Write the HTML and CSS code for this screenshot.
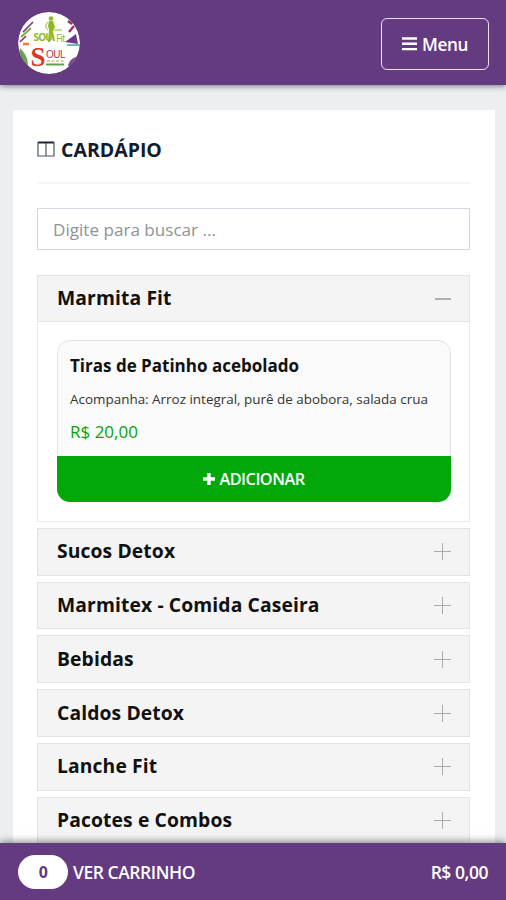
FILE: index.html
```html
<!DOCTYPE html>
<html lang="pt-BR">
<head>
    <meta charset="UTF-8">
    <meta name="viewport" content="width=device-width, initial-scale=1.0">
    <title>Cardápio - Soul Fit</title>
    <link rel="stylesheet" href="styles.css">
</head>
<body>

    <header class="topbar">
        <svg class="logo" viewBox="0 0 62 62" role="img" aria-label="Soul Fit / Soul Food">
            <defs>
                <clipPath id="logoClip"><circle cx="31" cy="31" r="31"/></clipPath>
            </defs>
            <g clip-path="url(#logoClip)">
                <circle cx="31" cy="31" r="31" fill="#fff"/>
                <path d="M5 20 15 10M2 30 8 24" stroke="#7a3d74" stroke-width="1.6"/>
                <path d="M3 25 13 16" stroke="#7fae45" stroke-width="2"/>
                <path d="M51 20 56 14M50 9l4 3" stroke="#a82a5e" stroke-width="2.4"/>
                <path d="M47 30 58 22 60 32Z" fill="#6d3a88"/>
                <path d="M49 33h13" stroke="#3da58c" stroke-width="1.6"/>
                <path d="M5 32h6" stroke="#ee7b3c" stroke-width="2.4"/>
                <path d="M2 36c5 5 8 10 8 18L0 46Z" fill="#6ca34a"/>
                <path d="M50 54c1-5 4-8 8-9l-2 10Z" fill="#7c4a8c"/>
                <!-- figura -->
                <circle cx="33" cy="6.500" r="2.300" fill="#8dbb1e"/>
                <path d="M31 9h4l2 6-2 4 2 10h-2l-2-8-1 9h-2l1-12-1-4Z" fill="#8dbb1e"/>
                <path d="M30 10c-3 3-3 6 0 8M36 18h8" stroke="#8dbb1e" stroke-width="1" fill="none"/>
                <text x="15.500" y="29" class="logo-fit">SOU</text>
                <text x="38" y="30" class="logo-fit thin">Fit</text>
                <text x="12.500" y="54" class="logo-s">S</text>
                <text x="28" y="46" class="logo-oul">OUL</text>
                <path d="M29 49h17" stroke="#c4d99b" stroke-width="2" stroke-dasharray="3 1.500"/>
                <path d="M28 52.500h18" stroke="#5fa548" stroke-width="2"/>
            </g>
        </svg>
        <button type="button" class="btn-menu">
            <svg class="icon-bars" viewBox="0 0 15 14"><path d="M0 1.500h15M0 6.800h15M0 12.100h15"/></svg>
            <span>Menu</span>
        </button>
    </header>

    <main class="card">
        <h1 class="card-title">
            <svg class="icon-columns" viewBox="0 0 18 16"><path d="M1 1.500h16" class="thick"/><path d="M1 1v14h16V1M9 2v13"/></svg>
            <span>CARDÁPIO</span>
        </h1>

        <input type="text" class="search" placeholder="Digite para buscar ...">

        <div class="accordion">
            <section class="group open">
                <h2 class="group-head">Marmita Fit <i class="toggle"></i></h2>
                <div class="group-body">
                    <div class="product">
                        <div class="product-info">
                            <h3>Tiras de Patinho acebolado</h3>
                            <p class="desc">Acompanha: Arroz integral, purê de abobora, salada crua</p>
                            <p class="price">R$ 20,00</p>
                        </div>
                        <button type="button" class="btn-add">
                            <svg class="icon-add" viewBox="0 0 12 12"><path d="M6 0v12M0 6h12"/></svg>
                            <span>ADICIONAR</span>
                        </button>
                    </div>
                </div>
            </section>
            <section class="group"><h2 class="group-head">Sucos Detox <i class="toggle"></i></h2></section>
            <section class="group"><h2 class="group-head">Marmitex - Comida Caseira <i class="toggle"></i></h2></section>
            <section class="group"><h2 class="group-head">Bebidas <i class="toggle"></i></h2></section>
            <section class="group"><h2 class="group-head">Caldos Detox <i class="toggle"></i></h2></section>
            <section class="group"><h2 class="group-head">Lanche Fit <i class="toggle"></i></h2></section>
            <section class="group"><h2 class="group-head">Pacotes e Combos <i class="toggle"></i></h2></section>
        </div>
    </main>

    <footer class="cart-bar">
        <span class="cart-count">0</span>
        <span class="cart-label">VER CARRINHO</span>
        <span class="cart-total">R$ 0,00</span>
    </footer>

</body>
</html>
```
FILE: styles.css
```css
* {
    box-sizing: border-box;
}
body {
    margin: 0;
    height: 900px;
    overflow: hidden;
    display: flex;
    flex-direction: column;
    background: #ebeff2;
    color: #111;
    font-family: "Open Sans", sans-serif;
}
h1, h2, h3, p {
    margin: 0;
}
button {
    font-family: inherit;
    color: #fff;
    cursor: pointer;
}
svg {
    flex: none;
}

/* Topo */
.topbar {
    flex: none;
    height: 85px;
    padding: 0 17px 0 18px;
    display: flex;
    align-items: center;
    justify-content: space-between;
    background: #643a80;
    box-shadow: 0 1px 6px rgba(0, 0, 0, 0.5);
    z-index: 1;
}
.logo {
    width: 62px;
    height: 62px;
}
.logo-fit {
    font: bold 10px "Open Sans", sans-serif;
    letter-spacing: -0.8px;
    fill: #8dbb1e;
}
.logo-fit.thin {
    font-weight: 400;
}
.logo-s {
    font: bold 27px "Liberation Serif", serif;
    fill: #d83a27;
}
.logo-oul {
    font: 10px "Liberation Sans", sans-serif;
    letter-spacing: -0.5px;
    fill: #c5303a;
}
.btn-menu {
    width: 108px;
    height: 52px;
    margin-top: 2px;
    padding: 1px 0 0;
    display: flex;
    align-items: center;
    justify-content: center;
    gap: 5px;
    background: none;
    border: 1.5px solid #eadff0;
    border-radius: 6px;
    font-size: 17.2px;
    font-weight: 600;
    letter-spacing: -0.4px;
}
.icon-bars {
    width: 15px;
    height: 14px;
    fill: none;
    stroke: #fff;
    stroke-width: 2.4;
}

/* Cardápio */
.card {
    flex: 1;
    min-height: 0;
    margin: 25px 11px 0 13px;
    padding: 0 25px 0 24px;
    background: #fff;
    overflow: hidden;
}
.card-title {
    height: 74px;
    padding-top: 6px;
    display: flex;
    align-items: center;
    gap: 6px;
    border-bottom: 2px solid #f5f5f5;
    color: #131b2e;
    font-size: 19.5px;
    font-weight: bold;
}
.icon-columns {
    width: 18px;
    height: 16px;
    fill: none;
    stroke: #4b5260;
    stroke-width: 1.2;
}
.icon-columns .thick {
    stroke: #1b2338;
    stroke-width: 2;
}
.search {
    display: block;
    width: 100%;
    height: 42px;
    margin: 24px 0 25px;
    padding: 1px 15px 0;
    border: 1.5px solid #d5d5e2;
    background: #fff;
    font-family: inherit;
    font-size: 17.1px;
}
.search::placeholder {
    color: #929292;
}
.accordion {
    display: flex;
    flex-direction: column;
    gap: 6px;
}
.group-head {
    height: 47.8px;
    padding: 0 18px 2px 19px;
    display: flex;
    align-items: center;
    justify-content: space-between;
    background: #f4f4f4;
    border: 1.5px solid #e3e3e3;
    font-size: 19.3px;
    font-weight: bold;
    letter-spacing: 0.12px;
}
.toggle {
    width: 17px;
    height: 17px;
    margin-top: 2px;
    background:
        linear-gradient(#aaa, #aaa) center / 17px 1px no-repeat,
        linear-gradient(#aaa, #aaa) center / 1px 17px no-repeat;
}
.open .group-head {
    height: 47px;
}
.open .toggle {
    background: linear-gradient(#b0b0b0, #b0b0b0) center / 16px 2px no-repeat;
}
.group-body {
    height: 199.8px;
    padding: 18px 18px 0 19px;
    border: 1.5px solid #ebebeb;
    border-top: 0;
}
.product {
    height: 161.500px;
    display: flex;
    flex-direction: column;
    border-radius: 13px;
    overflow: hidden;
}
.product-info {
    flex: 1;
    padding: 13px 12px 0;
    background: #fafafa;
    border: 1.5px solid #e2e2e2;
    border-bottom: 0;
    border-radius: 13px 13px 0 0;
}
.product h3 {
    font-size: 17px;
    line-height: 24px;
    font-weight: bold;
}
.desc {
    margin-top: 12px;
    color: #333;
    font-size: 13.45px;
    line-height: 18px;
    white-space: nowrap;
}
.price {
    margin-top: 12px;
    color: #06a506;
    font-size: 17px;
    line-height: 24px;
}
.btn-add {
    height: 46px;
    padding: 0;
    display: flex;
    align-items: center;
    justify-content: center;
    gap: 4px;
    background: #02a80a;
    border: 0;
    font-size: 16.3px;
    font-weight: 600;
    letter-spacing: -0.5px;
}
.icon-add {
    width: 12px;
    height: 12px;
    stroke: #fff;
    stroke-width: 3.4;
}

/* Carrinho */
.cart-bar {
    flex: none;
    height: 57px;
    padding: 0 18px;
    display: flex;
    align-items: center;
    gap: 5px;
    background: #643a80;
    box-shadow: 0 -1px 8px rgba(0, 0, 0, 0.5);
    color: #fff;
    font-size: 17.5px;
    font-weight: 600;
    letter-spacing: -0.45px;
    z-index: 1;
}
.cart-count {
    width: 50px;
    height: 34px;
    border-radius: 17px;
    background: #fff;
    color: #643a80;
    font-size: 16px;
    font-weight: bold;
    line-height: 34px;
    text-align: center;
}
.cart-total {
    margin-left: auto;
}
```
